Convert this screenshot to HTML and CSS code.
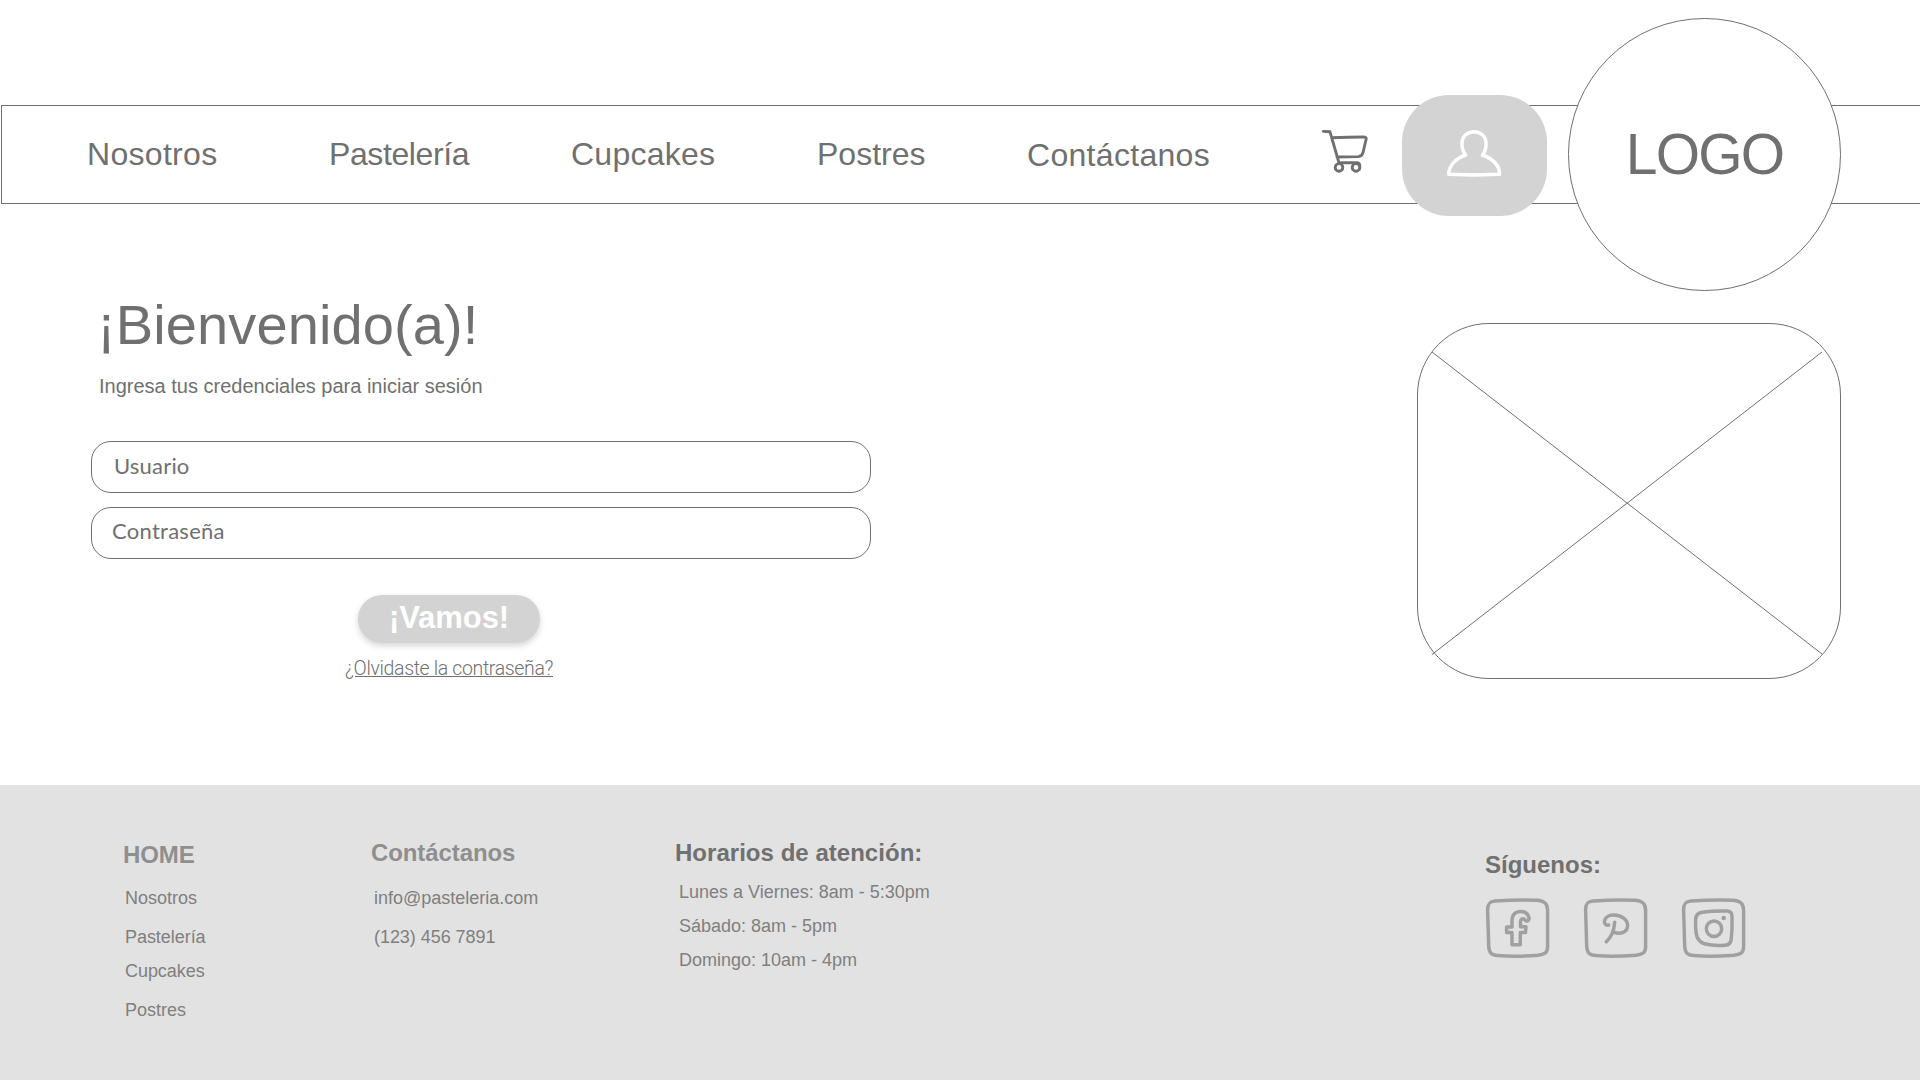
FILE: index.html
```html
<!DOCTYPE html>
<html lang="es">
<head>
<meta charset="utf-8">
<title>Pastelería - Iniciar sesión</title>
<link rel="stylesheet" href="styles.css">
</head>
<body>
<header class="navbar">
  <nav class="nav">
    <a class="nav-link">Nosotros</a>
    <a class="nav-link tight">Pastelería</a>
    <a class="nav-link cupcakes">Cupcakes</a>
    <a class="nav-link postres">Postres</a>
    <a class="nav-link lower">Contáctanos</a>
  </nav>
  <svg class="cart" width="50" height="47" viewBox="0 0 50 47">
    <path d="M3.3 3.4 L10 3.8 L19 34.8 M11.8 9.8 L28 9.2 L43 9 Q46.6 8.9 46.2 11 L43 24.5 Q42.2 28.4 38.5 28.6 L16.9 29 M18.5 35.6 L21 34.8 H37 Q40 34.8 39.8 38"/>
    <circle cx="19" cy="39.4" r="3.8"/>
    <circle cx="36" cy="39.4" r="3.8"/>
  </svg>
  <a class="account">
    <svg class="user" width="58" height="52" viewBox="0 0 58 52">
      <path d="M20.6 27 C17.6 23 16.9 20 16.9 16 C16.9 8.6 22.2 3.7 29 3.7 C35.8 3.7 41.1 8.6 41.1 16 C41.1 20 40.6 23 37.4 27 C47 30.5 54.6 37 54.5 46.3 L29 46.9 L3.7 46.3 C3.8 37.5 11 30.5 20.6 27 Z"/>
    </svg>
  </a>
  <div class="logo">LOGO</div>
</header>

<main class="main">
  <form class="login">
    <h1 class="title">¡Bienvenido(a)!</h1>
    <p class="subtitle">Ingresa tus credenciales para iniciar sesión</p>
    <div class="field user-field">Usuario</div>
    <div class="field pass-field">Contraseña</div>
    <div class="submit">¡Vamos!</div>
    <a class="forgot">¿Olvidaste la contraseña?</a>
  </form>
  <svg class="picture" width="424" height="357" viewBox="0 0 424 357">
    <rect x=".5" y=".5" width="423" height="355" rx="71.5"/>
    <path d="M15 29 L405 331 M15 331.5 L405 29"/>
  </svg>
</main>

<footer class="footer">
  <section class="col home">
    <h2 class="heading muted">HOME</h2>
    <ul class="list">
      <li>Nosotros</li>
      <li class="wide">Pastelería</li>
      <li class="wide near">Cupcakes</li>
      <li>Postres</li>
    </ul>
  </section>
  <section class="col contact">
    <h2 class="heading muted">Contáctanos</h2>
    <ul class="list">
      <li>info@pasteleria.com</li>
      <li class="wide">(123) 456 7891</li>
    </ul>
  </section>
  <section class="col hours">
    <h2 class="heading">Horarios de atención:</h2>
    <ul class="list">
      <li>Lunes a Viernes: 8am - 5:30pm</li>
      <li>Sábado: 8am - 5pm</li>
      <li>Domingo: 10am - 4pm</li>
    </ul>
  </section>
  <section class="col follow">
    <h2 class="heading">Síguenos:</h2>
    <div class="social">
      <svg width="66" height="64" viewBox="0 0 66 64">
        <path d="M3.6 14 C3.6 7 6 5.2 11 4.9 C25 4 42 3.8 53 4.2 C60 4.6 63.5 7 63.6 14 V51 C63.6 57 60 58.5 54 59.2 C40 60.4 25 60.6 14 59.6 C7.5 59 5 57 4.7 50 Z"/>
        <path d="M28 48.7 V36.6 H22.6 V31 H28 V25 C28 18.6 31.5 15.4 36.5 15.4 C41.5 15.4 44.2 18.6 45 21.6 C45.6 24.4 42.4 26.2 41 23.9 C39.6 21.8 36.6 22.6 36.5 26 V30.7 H42 L41.5 36.6 H36.3 V48.7 Z"/>
      </svg>
      <svg width="66" height="64" viewBox="0 0 66 64">
        <path d="M3.6 14 C3.6 7 6 5.2 11 4.9 C25 4 42 3.8 53 4.2 C60 4.6 63.5 7 63.6 14 V51 C63.6 57 60 58.5 54 59.2 C40 60.4 25 60.6 14 59.6 C7.5 59 5 57 4.7 50 Z"/>
        <path d="M26.6 29 C23.5 30 22 27 22.6 24.5 C23.6 20.5 28 18.9 32 19 C39.5 19.2 45.6 23.5 45.6 29.5 C45.6 36.5 38 38.6 32.4 36.4 M32.7 26.3 C32.2 33 29.5 41 24.3 45.8"/>
      </svg>
      <svg width="66" height="64" viewBox="0 0 66 64">
        <path d="M3.6 14 C3.6 7 6 5.2 11 4.9 C25 4 42 3.8 53 4.2 C60 4.6 63.5 7 63.6 14 V51 C63.6 57 60 58.5 54 59.2 C40 60.4 25 60.6 14 59.6 C7.5 59 5 57 4.7 50 Z"/>
        <path d="M22.5 16.2 C31 14.9 40 15 47 15.1 C50.5 15.2 52 17 52 20.5 C52.3 28 52 36 51.2 43.5 C50.7 47.8 48.7 49 45 49.3 C38.5 49.8 31 49.6 24.5 47.8 C19 46 17 43 16.2 37.5 C15.4 32 15.3 27.5 15.7 23 C16 18.5 18 16.7 22.5 16.2 Z"/>
        <circle cx="34" cy="32.7" r="7.7"/>
        <circle class="dot" cx="43.7" cy="22" r="2.3"/>
      </svg>
    </div>
  </section>
</footer>
</body>
</html>
```
FILE: styles.css
```css
* { box-sizing: border-box; margin: 0; padding: 0; }

body {
  width: 1920px;
  height: 1080px;
  overflow: hidden;
  display: flex;
  flex-direction: column;
  background: #fff;
  color: #707070;
  font-family: "Liberation Sans", Arial, sans-serif;
}

.navbar {
  display: flex;
  align-items: flex-start;
  flex: none;
  height: 99px;
  margin: 105px 0 0 1px;
  padding-left: 85px;
  border: solid #707070;
  border-width: 1px 0 1px 1px;
}

.nav {
  display: grid;
  grid-template-columns: 242px 242px 246px 210px 295px;
  padding-top: 28px;
}

.nav-link { font-size: 32px; line-height: 40px; letter-spacing: .3px; }
.nav-link.tight { letter-spacing: -.4px; }
.nav-link.cupcakes { letter-spacing: .26px; }
.nav-link.postres { letter-spacing: 0; }
.nav-link.lower { padding-top: 1px; }

.cart {
  flex: none;
  margin: 22px 32px 0 -2px;
  fill: none;
  stroke: #707070;
  stroke-width: 2.9;
  stroke-linecap: round;
  stroke-linejoin: round;
}

.account {
  flex: none;
  width: 145px;
  height: 121px;
  margin-top: -11px;
  padding: 33px 0 0 43px;
  border-radius: 47px;
  background: #d3d3d3;
}

.user {
  display: block;
  fill: none;
  stroke: #fff;
  stroke-width: 3.5;
  stroke-linejoin: round;
}

.logo {
  flex: none;
  width: 273px;
  height: 273px;
  margin: -88px 0 0 21px;
  border: 1px solid #707070;
  border-radius: 50%;
  background: #fff;
  font-size: 57px;
  line-height: 271px;
  letter-spacing: -1.8px;
  text-align: center;
}

.main {
  display: flex;
  align-items: flex-start;
  flex: none;
  height: 581px;
  padding-left: 91px;
}

.login {
  display: flex;
  flex-direction: column;
  flex: none;
  width: 780px;
  padding-top: 89px;
}

.title {
  margin-left: 6px;
  font-size: 56px;
  font-weight: 400;
  line-height: 64px;
  letter-spacing: .12px;
}

.subtitle { margin: 17px 0 43px 8px; font-size: 20px; line-height: 24px; }

.field {
  height: 52px;
  border: 1px solid #707070;
  border-radius: 20px;
  font-family: Lato, sans-serif;
  font-size: 22px;
}

.user-field { margin-bottom: 14px; padding-left: 22px; line-height: 48px; letter-spacing: .2px; }
.pass-field { padding-left: 20px; line-height: 46px; letter-spacing: .27px; }

.submit {
  width: 182px;
  height: 48px;
  margin: 36px 0 13px 267px;
  border-radius: 24px;
  background: #d3d3d3;
  box-shadow: 0 3px 6px rgba(0, 0, 0, .16);
  color: #fff;
  font-size: 31px;
  font-weight: 700;
  line-height: 46px;
  letter-spacing: -.05px;
  text-align: center;
}

.forgot {
  align-self: flex-start;
  margin: 1px 0 0 254px;
  font-family: Roboto, sans-serif;
  font-size: 19.5px;
  font-weight: 300;
  line-height: 24px;
  letter-spacing: -.35px;
  text-decoration: underline;
}

.picture {
  flex: none;
  margin: 119px 0 0 546px;
  fill: none;
  stroke: #707070;
}

.footer {
  display: grid;
  grid-template-columns: 247px 305px 809px 300px;
  flex: 1;
  padding-left: 123px;
  background: #e2e2e2;
}

.heading { font-size: 24px; line-height: 28px; }
.heading.muted { color: #8f8f8f; }

.list {
  padding-left: 2px;
  color: #7f7f7f;
  font-size: 18px;
  line-height: 24px;
  list-style: none;
}

.wide { margin-top: 15px; letter-spacing: -.05px; }
.wide.near { margin-top: 10px; }

.home { padding-top: 56px; }
.home .heading { margin-bottom: 17px; letter-spacing: -.1px; }
.home li:last-child { margin-top: 15px; }

.contact { padding-top: 54px; }
.contact .heading { margin-bottom: 19px; padding-left: 1px; letter-spacing: -.1px; }
.contact .list { padding-left: 4px; }

.hours { padding-top: 54px; }
.hours .heading { margin-bottom: 13px; letter-spacing: .03px; }
.hours .list { display: grid; gap: 10px; padding-left: 4px; }

.follow { padding-top: 66px; }
.follow .heading { padding-left: 1px; }

.social {
  display: flex;
  gap: 32px;
  margin-top: 17px;
  fill: none;
  stroke: #a0a0a0;
  stroke-width: 3.5;
  stroke-linecap: round;
  stroke-linejoin: round;
}

.dot { fill: #a0a0a0; stroke: none; }
```
